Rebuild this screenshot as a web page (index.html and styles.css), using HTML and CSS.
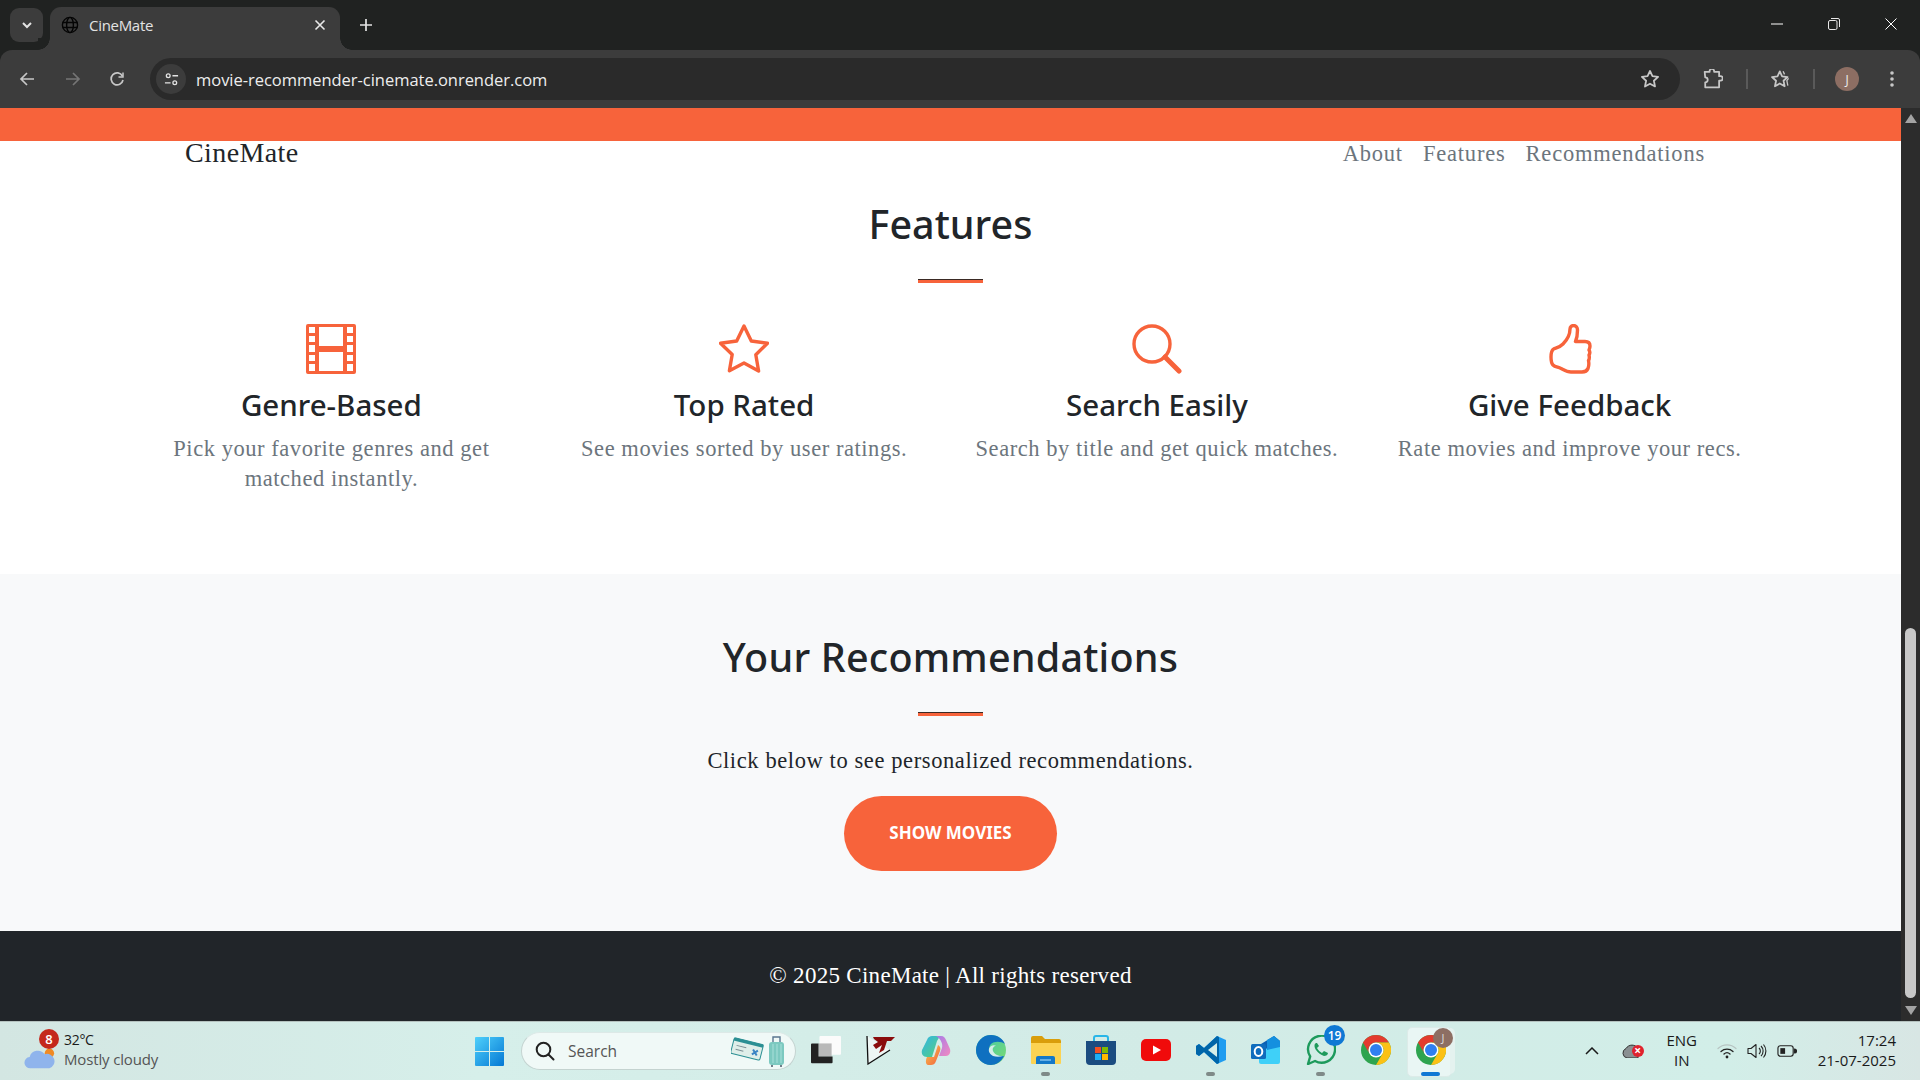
FILE: index.html
```html
<!DOCTYPE html>
<html lang="en">
<head>
<meta charset="utf-8">
<title>CineMate</title>
<link rel="stylesheet" href="styles.css">
</head>
<body>
<div class="screen">
  <header class="browser">
    <div class="tabstrip">
      <div class="tab-list"><svg class="ico14" viewBox="0 0 14 14"><path d="M3 5l4 4 4-4" fill="none" stroke="#e3e3e3" stroke-width="2"/></svg></div>
      <div class="tab">
        <svg class="globe" viewBox="0 0 18 18" fill="none" stroke="#050505" stroke-width="1.4"><circle cx="9" cy="9" r="7.6"/><ellipse cx="9" cy="9" rx="3.4" ry="7.6"/><path d="M1.5 6.5h15M1.5 11.5h15"/></svg>
        <span class="tab-title">CineMate</span>
        <svg class="tab-close" viewBox="0 0 12 12"><path d="M1.5 1.5l9 9M10.5 1.5l-9 9" stroke="#e8e8e8" stroke-width="1.6"/></svg>
      </div>
      <svg class="new-tab" viewBox="0 0 14 14"><path d="M7 1v12M1 7h12" stroke="#e3e3e3" stroke-width="1.7"/></svg>
      <div class="win-controls">
        <svg viewBox="0 0 14 14"><path d="M1 7h12" stroke="#fff" stroke-width="1"/></svg>
        <svg viewBox="0 0 14 14" fill="none" stroke="#e8e8e8" stroke-width="1"><rect x="1.5" y="3.5" width="8.5" height="9" rx="1.5"/><path d="M4 1.5h7a1.5 1.5 0 0 1 1.5 1.5v7"/></svg>
        <svg viewBox="0 0 14 14"><path d="M1.5 1.5l11 11M12.5 1.5l-11 11" stroke="#fff" stroke-width="1"/></svg>
      </div>
    </div>
    <div class="toolbar">
      <svg class="tb back" viewBox="0 0 16 16" fill="none" stroke="#c7c7c7" stroke-width="1.7"><path d="M15 8H2M8 2L2 8l6 6"/></svg>
      <svg class="tb fwd" viewBox="0 0 16 16" fill="none" stroke="#757575" stroke-width="1.7"><path d="M1 8h13M8 2l6 6-6 6"/></svg>
      <svg class="tb reload" viewBox="0 0 16 16" fill="none" stroke="#c7c7c7" stroke-width="1.7"><path d="M13.4 5A6 6 0 1 0 14 9"/><path d="M14 1.5V6H9.5" stroke-width="1.5"/></svg>
      <div class="omnibox">
        <div class="site-info"><svg viewBox="0 0 16 16" fill="none" stroke="#e3e3e3" stroke-width="1.4"><circle cx="4.5" cy="4" r="2"/><path d="M9 4h6M1 11.5h6"/><circle cx="11.5" cy="11.5" r="2"/></svg></div>
        <span class="url">movie-recommender-cinemate.onrender.com</span>
        <svg class="omni-star" viewBox="0 0 18 18" fill="none" stroke="#c7c7c7" stroke-width="1.6" stroke-linejoin="round"><path d="M9 1.8l2.2 4.7 5.1.6-3.8 3.5 1 5.1L9 13.2l-4.5 2.5 1-5.1L1.700 7.100l5.100-.6z"/></svg>
      </div>
      <svg class="tb ext" viewBox="0 0 18 18" fill="none" stroke="#c7c7c7" stroke-width="1.6" stroke-linejoin="round"><path d="M1.500 2.500H6a2 2 0 0 1 4-1v1h4.500v4h1.200a2 2 0 0 1 0 4h-1.200v6H2v-4.500a2.200 2.200 0 0 0 0-4.500z"/></svg>
      <i class="tb-sep"></i>
      <svg class="tb stars" viewBox="0 0 20 18" fill="none" stroke="#c7c7c7" stroke-width="1.600" stroke-linejoin="round"><path d="M8 2l2.100 4.600 5 .6-3.700 3.400 1 5L8 13.100l-4.400 2.500 1-5L.9 7.200l5-.6z"/><path d="M11 2l1.300 2.800M16 8.500l-1.600 2 .9 4.500" stroke-width="1.200"/></svg>
      <i class="tb-sep"></i>
      <span class="avatar">J</span>
      <svg class="tb dots" viewBox="0 0 4 18" fill="#c7c7c7"><circle cx="2" cy="3" r="1.800"/><circle cx="2" cy="9" r="1.800"/><circle cx="2" cy="15" r="1.800"/></svg>
    </div>
  </header>

  <div class="viewport">
    <main class="page">
      <div class="accent-bar"></div>
      <nav class="site-nav">
        <span class="logo">CineMate</span>
        <div class="nav-links"><span>About</span><span>Features</span><span>Recommendations</span></div>
      </nav>
      <section class="features">
        <h2 class="section-title">Features</h2>
        <div class="rule"></div>
        <div class="feature-grid">
          <article class="feature">
            <svg class="feature-icon" viewBox="0 0 50 50"><path fill="#f7633b" fill-rule="evenodd" d="M2 0h46a2 2 0 0 1 2 2v46a2 2 0 0 1-2 2H2a2 2 0 0 1-2-2V2a2 2 0 0 1 2-2zM3 3v6h6V3zM3 12v6h6v-6zM3 21v7h6v-7zM3 31v6h6v-6zM3 40v7h6v-7zM41 3v6h6V3zM41 12v6h6v-6zM41 21v7h6v-7zM41 31v6h6v-6zM41 40v7h6v-7zM13 3v19h24V3zM13 28v19h24V28z"/></svg>
            <h3>Genre-Based</h3>
            <p>Pick your favorite genres and get matched instantly.</p>
          </article>
          <article class="feature">
            <svg class="feature-icon" viewBox="0 0 50 50"><path fill="none" stroke="#f7633b" stroke-width="3.4" stroke-linejoin="round" d="M25 2l7.300 15 16.200 2.300-11.700 11.500 2.800 16.200L25 39l-14.600 7.700 2.800-16.200L1.500 19.300 17.700 17z"/></svg>
            <h3>Top Rated</h3>
            <p>See movies sorted by user ratings.</p>
          </article>
          <article class="feature">
            <svg class="feature-icon" viewBox="0 0 50 50" fill="none" stroke="#f7633b"><circle cx="20" cy="20" r="18" stroke-width="3.400"/><path d="M33 33l14 14" stroke-width="5" stroke-linecap="round"/></svg>
            <h3>Search Easily</h3>
            <p>Search by title and get quick matches.</p>
          </article>
          <article class="feature">
            <svg class="feature-icon" viewBox="0 0 50 50"><path fill="none" stroke="#f7633b" stroke-width="3.400" stroke-linejoin="round" d="M25 5C25 2.500 27 1.500 28.500 1.500 31 1.500 32.500 3.500 32.500 6 32.500 10 32 14 30.500 17.500L40 17.500C43.500 17.500 45 19.500 45 22 45 24 44.500 25 44 26 45 27.500 45 29.500 44 31 44.500 33 44.500 35 43.500 36.500 44 39 44 42 43 44.500 42 47 40 48 37 48L26 48C22 48 19 46 16 44.500 13 43 10 43 8 41 6 39 6 37 6 33 6 29.500 6 27.500 8 25.500 10 24 14 24 18 20 22 16 25 11 25 5Z"/></svg>
            <h3>Give Feedback</h3>
            <p>Rate movies and improve your recs.</p>
          </article>
        </div>
      </section>
      <section class="recs">
        <h2 class="section-title">Your Recommendations</h2>
        <div class="rule"></div>
        <p class="recs-text">Click below to see personalized recommendations.</p>
        <button class="cta">SHOW MOVIES</button>
      </section>
      <footer class="site-footer">© 2025 CineMate | All rights reserved</footer>
    </main>
    <aside class="scrollbar">
      <i class="arrow up"></i>
      <div class="track"><div class="thumb"></div></div>
      <i class="arrow down"></i>
    </aside>
  </div>

  <footer class="taskbar">
    <div class="weather">
      <div class="weather-icon">
        <svg viewBox="0 0 34 24"><circle cx="27" cy="7" r="5" fill="#f08a24"/><path d="M7 23a6 6 0 0 1-1-12 9 9 0 0 1 16-3 7.500 7.500 0 0 1 5 15z" fill="#8fb4ec"/></svg>
        <span class="weather-badge">8</span>
      </div>
      <div class="weather-text"><span class="temp">32°C</span><span class="cond">Mostly cloudy</span></div>
    </div>
    <div class="task-center">
      <svg class="task-win" viewBox="0 0 29 29"><defs><linearGradient id="w" x1="0" y1="0" x2="1" y2="1"><stop offset="0" stop-color="#4fd0fb"/><stop offset="1" stop-color="#0478d4"/></linearGradient></defs><path fill="url(#w)" d="M1 0h13v14H0V1a1 1 0 0 1 1-1zM15 0h13a1 1 0 0 1 1 1v13H15zM0 15h14v14H1a1 1 0 0 1-1-1zM15 15h14v13a1 1 0 0 1-1 1H15z"/></svg>
      <div class="task-search">
        <svg class="search-glass" viewBox="0 0 20 20" fill="none" stroke="#222" stroke-width="2"><circle cx="8.500" cy="8.500" r="6.800"/><path d="M13.500 13.500L18.500 18.500" stroke-linecap="round"/></svg>
        <span class="search-label">Search</span>
        <svg class="search-art" viewBox="0 0 56 32">
          <g transform="rotate(14 16 14)"><rect x="1" y="6" width="30" height="16" rx="1.500" fill="#dfeee9" stroke="#2b8f93"/><rect x="1" y="6" width="30" height="3" fill="#2b8f93"/><path d="M5 13h10M5 17h8" stroke="#7d8f94"/><path d="M22 13l5 5M27 13l-5 5" stroke="#3a84c4" stroke-width="2"/></g>
          <rect x="38" y="7" width="15" height="23" rx="3" fill="#7cc9c0"/><path d="M42 9v19M46 9v19M50 9v19" stroke="#a9e0da"/><path d="M42 7V2h7v5" fill="none" stroke="#5a7690" stroke-width="1.400"/><path d="M41 30v2M50 30v2" stroke="#456" stroke-width="1.500"/>
        </svg>
      </div>
      <div class="task-icons">
        <span class="app"><svg viewBox="0 0 32 30"><rect x="9" y="0" width="23" height="20" rx="1" fill="#fbfbfb"/><rect x="8" y="8" width="14" height="14" fill="#b9b9b9"/><path d="M1 8h7v14h15v6a1 1 0 0 1-1 1H1a1 1 0 0 1-1-1V9a1 1 0 0 1 1-1z" fill="#222"/></svg></span>
        <span class="app"><svg viewBox="0 0 30 30"><path d="M1 1l1 28 22-14" fill="#eef6f4" stroke="#111" stroke-width="1.300"/><path d="M7 2h22l-4 4h-4l-3 9-5 3 3-8-6 4-3-4 5-3-4-3z" fill="#8a0c0c"/></svg></span>
        <span class="app"><svg viewBox="0 0 30 30"><defs><linearGradient id="cp1" x1="0" y1="0" x2="1" y2="1"><stop offset="0" stop-color="#2fb5e8"/><stop offset="1" stop-color="#5ad07a"/></linearGradient><linearGradient id="cp2" x1="0" y1="0" x2="1" y2="1"><stop offset="0" stop-color="#a57be8"/><stop offset="1" stop-color="#f28ac0"/></linearGradient><linearGradient id="cp3" x1="0" y1="0" x2="1" y2="1"><stop offset="0" stop-color="#f9c74f"/><stop offset="1" stop-color="#f2603c"/></linearGradient></defs><path d="M11 1h8l-3 5-5 16H6C2 22 0 19 1 15L6 5c1-3 3-4 5-4z" fill="url(#cp1)"/><path d="M15 1h5c3 0 4 2 5 4l4 9c1 4-1 7-4 7h-7l3-8c1-4-1-9-6-12z" fill="url(#cp2)"/><path d="M6 22h7l4-12c2 1 3 3 2 6l-4 10c-1 3-3 4-5 4H7c-2 0-3-4-1-8z" fill="url(#cp3)"/></svg></span>
        <span class="app"><svg viewBox="0 0 30 30"><defs><linearGradient id="ed" x1="0" y1="0" x2="1" y2="1"><stop offset="0" stop-color="#38c6b8"/><stop offset="1" stop-color="#7edb6c"/></linearGradient></defs><circle cx="15" cy="15" r="15" fill="url(#ed)"/><path d="M0 15A15 15 0 0 1 15 0c7 0 12 4 14 9-4-3-11-3-14 0-3 3-2 8 2 10 4 2 8 2 11 2-3 6-8 9-13 9C6 30 0 23 0 15z" fill="#0f70c0"/><path d="M17 21c-4-2-6-7-2-10 2-1 4-1 5 0-2 0-4 2-3 5 1 3 5 5 10 5-3 1-7 1-10 0z" fill="#d5eee9"/></svg></span>
        <span class="app"><svg viewBox="0 0 30 30"><path d="M0 3a2 2 0 0 1 2-2h9l3 3h14a2 2 0 0 1 2 2v3H0z" fill="#d99e0b"/><path d="M0 8h30v20a1 1 0 0 1-1 1H1a1 1 0 0 1-1-1z" fill="#fcd352"/><path d="M5 29v-6a2 2 0 0 1 2-2h15a2 2 0 0 1 2 2v6z" fill="#1478c8"/><path d="M9 25h11" stroke="#7fc0ef" stroke-width="1.500"/></svg><b class="app-dot"></b></span>
        <span class="app"><svg viewBox="0 0 30 30"><path d="M8 7V3a2 2 0 0 1 2-2h10a2 2 0 0 1 2 2v4" fill="none" stroke="#29b6e8" stroke-width="2"/><path d="M0 6h30v20a4 4 0 0 1-4 4H4a4 4 0 0 1-4-4z" fill="#1b4c80"/><path d="M9 12h6v6H9z" fill="#f25022"/><path d="M16 12h6v6h-6z" fill="#7fba00"/><path d="M9 19h6v6H9z" fill="#1cb0f6"/><path d="M16 19h6v6h-6z" fill="#ffb900"/></svg></span>
        <span class="app"><svg viewBox="0 0 30 22" class="yt"><rect width="30" height="22" rx="5" fill="#f00b0b"/><path d="M12 6.500l8 4.500-8 4.500z" fill="#fff"/></svg></span>
        <span class="app"><svg viewBox="0 0 30 30"><path d="M21 1l9 4v20l-9 4L8 17l-5 4-3-2v-8l3-2 5 4z" fill="#1f9cf0"/><path d="M21 1L8 13 3 9l-3 2v8l3 2 5-4 13 12 2-1V2z" fill="#0065a9"/><path d="M21 8v14l-9-7z" fill="#d5eee9"/></svg><b class="app-dot"></b></span>
        <span class="app"><svg viewBox="0 0 30 30"><path d="M10 9L23 1l6 5v14H10z" fill="#0a5fb4"/><path d="M8 16l21-7v18a2 2 0 0 1-2 2H10a2 2 0 0 1-2-2z" fill="#3fd0f8"/><path d="M16 5l7-4 6 5v6l-13 3z" fill="#1490df"/><rect x="0" y="9" width="15" height="15" rx="1.500" fill="#0f6cbd"/><ellipse cx="7.500" cy="16.500" rx="3.800" ry="4.500" fill="none" stroke="#fff" stroke-width="2"/></svg></span>
        <span class="app"><svg viewBox="0 0 30 30" fill="none"><path d="M2 29l2.200-7.500A13.500 13.500 0 1 1 9 26z" stroke="#1d9a5c" stroke-width="2.400" stroke-linejoin="round"/><path d="M10 8c-2 1-2 4 0 7 2 3 5 5 8 6 2 0 4-1 4-3l-4-2-2 2c-2-1-4-3-5-5l2-2-2-3z" fill="#1d9a5c"/></svg><span class="count">19</span><b class="app-dot"></b></span>
        <span class="app"><svg viewBox="0 0 30 30"><use href="#chrome-mark"/></svg></span>
        <span class="app app-active"><i class="stack"></i><svg viewBox="0 0 30 30"><symbol id="chrome-mark" viewBox="0 0 30 30"><circle cx="15" cy="15" r="15" fill="#2ea44f"/><path d="M15 0a15 15 0 0 1 13 7.500H15a7.500 7.500 0 0 0-6.500 11.250L2 7.500A15 15 0 0 1 15 0z" fill="#e33b2e"/><path d="M28 7.500A15 15 0 0 1 15 30l6.500-11.250A7.500 7.500 0 0 0 15 7.500z" fill="#fbc116"/><circle cx="15" cy="15" r="7.500" fill="#fff"/><circle cx="15" cy="15" r="6" fill="#2f7ff0"/></symbol><use href="#chrome-mark"/></svg><span class="mini-avatar">J</span><b class="app-bar"></b></span>
      </div>
    </div>
    <div class="tray">
      <svg class="tray-chev" viewBox="0 0 14 8"><path d="M1 7l6-6 6 6" fill="none" stroke="#1a1a1a" stroke-width="1.500"/></svg>
      <span class="tray-cloud"><svg viewBox="0 0 20 14"><path d="M5 14a5 5 0 0 1-1-9.500 7 7 0 0 1 12 0V14z" fill="#8a9092" stroke="#333" stroke-width="1"/></svg><span class="tray-x">×</span></span>
      <div class="lang"><span>ENG</span><span>IN</span></div>
      <svg class="tray-ico wifi" viewBox="0 0 20 16" fill="none" stroke-linecap="round"><path d="M1 5.500a13 13 0 0 1 18 0" stroke="#b7c4c2" stroke-width="1.200"/><path d="M4 8.500a9 9 0 0 1 12 0M7 11a4.500 4.500 0 0 1 6 0" stroke="#222" stroke-width="1.300"/><circle cx="10" cy="14" r="1.400" fill="#222"/></svg>
      <svg class="tray-ico" viewBox="0 0 20 16" fill="none" stroke="#222" stroke-width="1.100" stroke-linejoin="round"><path d="M1 5.500h3l5-4v13l-5-4H1z"/><path d="M12 5a4 4 0 0 1 0 6M14 3a7 7 0 0 1 0 10M16.500 1.500a10 10 0 0 1 0 13"/></svg>
      <svg class="tray-ico" viewBox="0 0 21 14" fill="none" stroke="#222" stroke-width="1.200"><rect x="1" y="1.500" width="16" height="11" rx="2.500"/><rect x="3.500" y="4" width="5" height="6" fill="#222" stroke="none"/><path d="M18.500 5v4a2 2 0 0 0 0-4z" fill="#222"/></svg>
      <div class="clock"><span>17:24</span><span>21-07-2025</span></div>
    </div>
  </footer>
</div>
</body>
</html>
```
FILE: styles.css
```css
* { box-sizing: border-box; margin: 0; padding: 0; }
html, body { width: 1920px; height: 1080px; overflow: hidden; background: #202221; }
.screen { width: 1920px; height: 1080px; display: flex; flex-direction: column; font-family: "Liberation Serif", serif; }
svg { display: block; }

/* browser chrome */
.browser { height: 108px; flex: none; background: #202221; }
.tabstrip { height: 50px; display: flex; align-items: flex-start; }
.tab-list { width: 33px; height: 34px; margin: 8px 0 0 10px; border-radius: 9px; background: #3c3c3c; display: flex; align-items: center; justify-content: center; }
.ico14 { width: 14px; height: 14px; }
.tab { position: relative; width: 290px; height: 43px; margin: 7px 0 0 7px; padding: 0 14px 8px 11px; background: #3c3c3c; border-radius: 11px 11px 0 0; display: flex; align-items: center; font: 15px "Open Sans", sans-serif; color: #e3e3e3; }
.tab::before, .tab::after { content: ""; position: absolute; bottom: 0; width: 12px; height: 12px; }
.tab::before { left: -12px; background: radial-gradient(circle at 0 0, #202221 11.5px, #3c3c3c 12px); }
.tab::after { right: -12px; background: radial-gradient(circle at 100% 0, #202221 11.5px, #3c3c3c 12px); }
.globe { width: 18px; height: 18px; flex: none; }
.tab-title { margin-left: 10px; flex: 1; letter-spacing: -.3px; }
.tab-close { width: 12px; height: 12px; flex: none; }
.new-tab { width: 14px; height: 14px; margin: 18px 0 0 19px; }
.win-controls { margin-left: auto; margin-right: 22px; margin-top: 17px; display: flex; gap: 43px; }
.win-controls svg { width: 14px; height: 14px; }
.toolbar { height: 58px; background: #3c3c3c; border-radius: 12px 12px 0 0; display: flex; align-items: center; }
.tb { flex: none; }
.back { width: 16px; height: 16px; margin-left: 19px; }
.fwd { width: 16px; height: 16px; margin-left: 30px; }
.reload { width: 16px; height: 16px; margin-left: 28px; }
.omnibox { width: 1530px; height: 42px; margin-left: 25px; background: #2a2a2a; border-radius: 21px; display: flex; align-items: center; padding: 0 20px 0 6px; }
.site-info { width: 30px; height: 30px; border-radius: 50%; background: #3c3c3c; display: flex; align-items: center; justify-content: center; flex: none; }
.site-info svg { width: 15px; height: 15px; }
.url { margin-left: 10px; font: 16.5px "Open Sans", sans-serif; color: #eee; letter-spacing: -.03px; flex: 1; white-space: nowrap; }
.omni-star { width: 20px; height: 20px; flex: none; }
.ext { width: 20px; height: 20px; margin-left: 23px; }
.tb-sep { display: block; width: 2px; height: 20px; background: #5a5a5a; flex: none; }
.ext + .tb-sep { margin-left: 23px; }
.stars { width: 22px; height: 20px; margin-left: 23px; }
.stars + .tb-sep { margin-left: 20px; }
.avatar { width: 24px; height: 24px; margin-left: 20px; border-radius: 50%; background: #8d6e63; color: #eee; font: 12px "Open Sans", sans-serif; display: flex; align-items: center; justify-content: center; flex: none; }
.dots { width: 4px; height: 18px; margin-left: 31px; }

/* page */
.viewport { height: 913px; flex: none; display: flex; }
.page { width: 1901px; flex: none; background: #fff; display: flex; flex-direction: column; overflow: hidden; }
.accent-bar { height: 33px; background: #f7633b; flex: none; }
.site-nav { height: 26px; flex: none; padding: 0 196px 0 185px; display: flex; justify-content: space-between; align-items: center; }
.logo { font: 28px/24px "Liberation Serif", serif; color: #212529; letter-spacing: .4px; margin-top: -2px; }
.nav-links { display: flex; gap: 20px; font: 22.5px "Liberation Serif", serif; color: #6c757d; letter-spacing: .8px; }
.features { height: 407px; flex: none; padding: 29px 125px 0; display: flex; flex-direction: column; align-items: center; }
.section-title { font: 500 39.5px/56px "Noto Sans", sans-serif; color: #212529; }
.recs .section-title { letter-spacing: .2px; }
.rule { width: 65px; height: 4px; margin-top: 27px; background: #f7633b; border-top: 1px solid #3a2a24; flex: none; }
.feature-grid { width: 100%; margin-top: 41px; display: grid; grid-template-columns: repeat(4, 1fr); }
.feature { display: flex; flex-direction: column; align-items: center; text-align: center; padding: 0 12px; }
.feature-icon { width: 50px; height: 50px; }
.feature h3 { margin-top: 8px; font: 500 29.5px/46px "Noto Sans", sans-serif; color: #212529; }
.feature p { margin-top: 6px; font: 22.5px/30px "Liberation Serif", serif; color: #6c757d; letter-spacing: .55px; }
.recs { height: 357px; flex: none; background: #f8f9fa; padding: 55px 0 0; display: flex; flex-direction: column; align-items: center; }
.recs-text { margin-top: 30px; font: 22.5px/30px "Liberation Serif", serif; color: #212529; letter-spacing: .6px; }
.cta { width: 213px; height: 75px; margin-top: 20px; padding-bottom: 2px; border: 0; border-radius: 38px; background: #f7633b; color: #fff; font: 700 17px "Noto Sans", sans-serif; }
.site-footer { height: 90px; flex: none; background: #212529; color: #fff; display: flex; align-items: center; justify-content: center; font: 23px "Liberation Serif", serif; letter-spacing: .29px; }

.scrollbar { width: 19px; flex: none; background: #2c2c2c; display: flex; flex-direction: column; align-items: center; }
.arrow { display: block; width: 0; height: 0; flex: none; border-left: 6px solid transparent; border-right: 6px solid transparent; }
.up { margin-top: 6px; border-bottom: 9px solid #a3a3a3; }
.down { margin-bottom: 6px; border-top: 9px solid #a3a3a3; }
.track { flex: 1; width: 100%; padding-top: 505px; display: flex; justify-content: center; }
.thumb { width: 11px; height: 370px; border-radius: 6px; background: #c8c8c8; }

/* taskbar */
.taskbar { height: 59px; flex: none; position: relative; background: linear-gradient(90deg, #d3e6e2 0%, #d6efea 25%, #d2ebe6 60%, #d2eee8 90%, #d8e6e4 100%); border-top: 1px solid #b5c2bf; display: flex; align-items: center; font-family: "Open Sans", sans-serif; color: #1a1a1a; }
.weather { width: 475px; flex: none; padding-left: 24px; display: flex; align-items: center; }
.weather-icon { position: relative; width: 32px; height: 40px; flex: none; }
.weather-icon svg { position: absolute; left: 0; bottom: 1px; width: 32px; height: 24px; }
.weather-badge { position: absolute; left: 15px; top: -2px; width: 20px; height: 20px; border-radius: 50%; background: #c4281c; color: #fff; font: 600 13px/20px "Open Sans", sans-serif; text-align: center; }
.weather-text { margin-left: 8px; padding-bottom: 3px; display: flex; flex-direction: column; font-size: 14px; line-height: 20px; letter-spacing: -.3px; }
.cond { color: #555; font-size: 15px; line-height: 19px; letter-spacing: -.15px; }
.task-center { display: flex; align-items: center; flex: none; }
.task-win { width: 29px; height: 29px; flex: none; }
.task-search { width: 275px; height: 38px; margin-left: 17px; border-radius: 19px; background: #f0f9f7; border: 1px solid #c4d3d0; border-top-color: #dde9e7; display: flex; align-items: center; padding: 0 8px 0 13px; }
.search-glass { width: 20px; height: 20px; flex: none; }
.search-label { margin-left: 13px; flex: 1; font-size: 15.5px; color: #555; }
.search-art { width: 56px; height: 32px; flex: none; }
.task-icons { margin-left: 2px; display: flex; }
.app { position: relative; width: 55px; height: 58px; display: flex; align-items: center; justify-content: center; flex: none; }
.app > svg { width: 30px; height: 30px; position: relative; top: -1px; }
.app > svg.yt { height: 22px; }
.app-dot { position: absolute; left: 23px; bottom: 4px; width: 9px; height: 4px; border-radius: 2px; background: #7f8a88; }
.count { position: absolute; left: 31px; top: 3px; width: 21px; height: 21px; border-radius: 50%; background: #0f78d4; color: #fff; font: 600 12px/21px "Open Sans", sans-serif; text-align: center; }
.app-active::before { content: ""; position: absolute; left: 4px; top: 5px; width: 43px; height: 48px; background: #e9f6f4; border: 1px solid #dcebe8; border-radius: 5px; }
.stack { position: absolute; left: 47px; top: 6px; width: 5px; height: 46px; background: #e4f2ef; border-radius: 0 5px 5px 0; }
.mini-avatar { position: absolute; left: 30px; top: 6px; width: 20px; height: 20px; border-radius: 50%; background: #8d6e63; color: #ddd; font: 11px/20px "Open Sans", sans-serif; text-align: center; }
.app-bar { position: absolute; left: 18px; bottom: 4px; width: 19px; height: 4px; border-radius: 2px; background: #0f78d4; }
.tray { margin-left: auto; padding-right: 24px; display: flex; align-items: center; }
.tray-chev { width: 14px; height: 8px; flex: none; }
.tray-cloud { position: relative; width: 20px; height: 14px; margin-left: 23px; }
.tray-cloud svg { width: 20px; height: 14px; }
.tray-x { position: absolute; left: 10px; top: 1px; width: 12px; height: 12px; border-radius: 50%; background: #e0222e; color: #fff; font: 700 12px/12px "Open Sans", sans-serif; text-align: center; }
.lang { width: 34px; margin-left: 23px; padding-bottom: 3px; display: flex; flex-direction: column; align-items: center; font-size: 15px; line-height: 20px; }
.tray-ico { width: 20px; height: 16px; flex: none; margin-left: 10px; }
.wifi { margin-left: 18px; }
.clock { margin-left: 21px; padding-bottom: 3px; display: flex; flex-direction: column; align-items: flex-end; font-size: 15px; line-height: 20px; }
```
